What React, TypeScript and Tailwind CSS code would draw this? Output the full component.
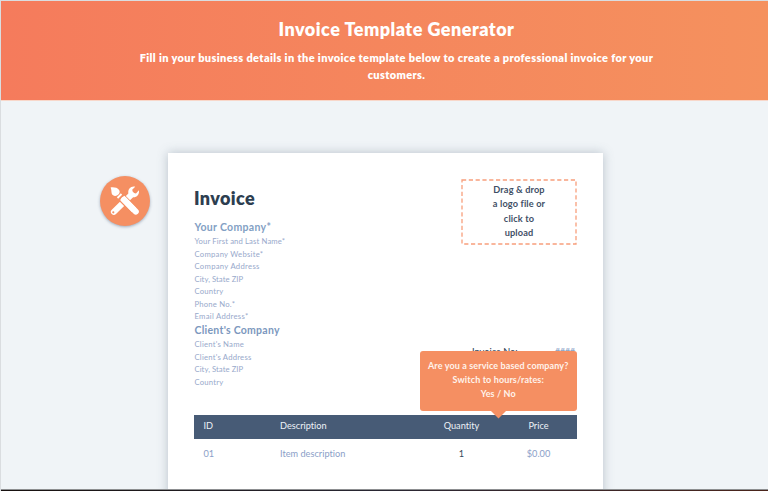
import React from "react";

const companyFields = [
  { text: "Your First and Last Name*", spacing: "tracking-[0.13px]" },
  { text: "Company Website*", spacing: "tracking-[0.26px]" },
  { text: "Company Address", spacing: "tracking-[0.3px]" },
  { text: "City, State ZIP", spacing: "tracking-[0.06px]" },
  { text: "Country", spacing: "tracking-[0.2px]" },
  { text: "Phone No.*", spacing: "tracking-[0.2px]" },
  { text: "Email Address*", spacing: "tracking-[0.28px]" },
];

const clientFields = [
  { text: "Client's Name", spacing: "tracking-[0.22px]" },
  { text: "Client's Address", spacing: "tracking-[0.22px]" },
  { text: "City, State ZIP", spacing: "tracking-[0.06px]" },
  { text: "Country", spacing: "tracking-[0.2px]" },
];

function Fields({ items }: { items: { text: string; spacing: string }[] }) {
  return (
    <ul className="pl-[0.5px] text-[7.7px] leading-[12.55px] text-[#98a9cb]">
      {items.map((f) => (
        <li key={f.text} className="whitespace-nowrap">
          <span className={f.spacing}>{f.text}</span>
        </li>
      ))}
    </ul>
  );
}

function ToolsIcon() {
  return (
    <svg viewBox="0 0 50 50" className="block h-[50px] w-[50px]" fill="#fff">
      {/* wrench */}
      <path
        d="M13.9 35.8 L31.5 18.6"
        stroke="#fff"
        strokeWidth="6"
        strokeLinecap="round"
      />
      <path d="M38.9 14.3 C39.7 18.6 36.6 21.8 32.6 21.3 L28.4 17.4 C27.6 13.2 31 9.8 35.2 10.8 L32.2 13.8 L33 16.8 L36 17.4 Z" />
      <circle cx="13.3" cy="36.3" r="1.1" fill="#f58f62" />
      {/* brush */}
      <path d="M20 20 L35.5 35.6" stroke="#f58f62" strokeWidth="8.2" />
      <path d="M22.2 21.8 L34 34" stroke="#fff" strokeWidth="6" />
      <path
        d="M24 23.6 L35.8 35.6"
        stroke="#fff"
        strokeWidth="6"
        strokeLinecap="round"
      />
      <path d="M17.5 22 L21.5 18" stroke="#fff" strokeWidth="1.8" />
      <path d="M10.6 11.4 C14 11.1 17.5 11.5 19.1 14 C20.1 15.7 19.8 17.1 18.4 18.6 C16.8 20.2 14.5 20.5 12.8 19.1 C10.9 17.4 12 14.6 10.6 11.4 Z" />
    </svg>
  );
}

export default function App() {
  return (
    <div className="relative flex h-[491px] w-[768px] flex-col overflow-hidden border-l border-t border-[#dadde0] bg-[#f0f4f7] font-['Lato','Open_Sans',sans-serif] [font-variant-ligatures:none]">
      <header className="h-[99px] shrink-0 bg-linear-to-r from-[#f57b5c] to-[#f5915e] pl-[24px] pt-[16px] text-center text-white shadow-[0_1px_0_#f8d7ca]">
        <h1 className="text-[18px] font-extrabold leading-6">
          <span className="tracking-[0.48px]">Invoice Template Generator</span>
        </h1>
        <p className="mt-[9px] text-[11px] font-extrabold leading-[16.7px] tracking-[0.36px]">
          Fill in your business details in the invoice template below to create a professional invoice for your
          <br />
          customers.
        </p>
      </header>

      <main className="flex min-h-0 flex-1 items-start pt-[53px]">
        <button className="ml-[98.5px] mt-[22.5px] h-[50px] w-[50px] shrink-0 rounded-full bg-[#f58f62] shadow-[0_1px_3px_rgba(60,80,110,0.45)]">
          <ToolsIcon />
        </button>

        <section className="ml-[18px] h-[345px] w-[435.5px] shrink-0 bg-white pl-[26.5px] pr-[26px] pt-[26px] shadow-[0_0_10px_rgba(80,100,120,0.35)]">
          <div className="flex h-[236px] justify-between">
            <div>
              <h2 className="mt-[7px] text-[18px] font-extrabold leading-[24px] text-[#2d3e50]">
                <span className="tracking-[0.36px]">Invoice</span>
              </h2>
              <h3 className="mt-[8.5px] pl-[0.5px] text-[10.5px] font-bold leading-[16px] text-[#839fc4]">
                <span className="tracking-[0.32px]">Your Company*</span>
              </h3>
              <div className="pt-[0.5px]">
                <Fields items={companyFields} />
              </div>
              <h3 className="pl-[0.5px] text-[10.5px] font-bold leading-[15px] text-[#7c98be]">
                <span className="tracking-[0.26px]">Client's Company</span>
              </h3>
              <div className="pt-[0.5px]">
                <Fields items={clientFields} />
              </div>
            </div>

            <div className="flex flex-col items-end">
              <div className="relative flex h-[66px] w-[116px] items-center justify-center text-center text-[9.2px] font-bold leading-[14.2px] tracking-[0.13px] text-[#3f4f66]">
                <svg className="absolute inset-0 h-full w-full" fill="none">
                  <rect
                    x="1"
                    y="1"
                    width="114"
                    height="64"
                    stroke="#f89f7c"
                    strokeWidth="1.3"
                    strokeDasharray="4.2 2.6"
                  />
                </svg>
                <p className="-mt-[1px]">
                  Drag &amp; drop
                  <br />a logo file or
                  <br />
                  click to
                  <br />
                  upload
                </p>
              </div>

              <div className="relative mt-[98.5px] flex h-4 w-[105px] justify-between pr-[2px] text-[9.2px] leading-4">
                <span className="font-medium text-[#33475b]">Invoice No:</span>
                <span className="text-[8.6px] font-bold text-[#8fa8c8]">####</span>
                <div className="absolute right-0 top-[7.5px] h-[60px] w-[157.5px] rounded-[3px] bg-[#f58f62] pt-[8px] text-center text-[9px] font-bold leading-[14.2px] tracking-[0.12px] text-[#fff3ec]">
                  Are you a service based company?
                  <br />
                  Switch to hours/rates:
                  <br />
                  Yes / No
                  <svg className="absolute left-[71px] top-[60px] h-[8px] w-[15px]" viewBox="0 0 15 8">
                    <path d="M0 0 H15 L7.5 7.5 Z" fill="#f58f62" />
                  </svg>
                </div>
              </div>
            </div>
          </div>

          <table className="w-full table-fixed text-left text-[9.2px]">
            <colgroup>
              <col className="w-[76px]" />
              <col className="w-[153px]" />
              <col className="w-[77px]" />
              <col className="w-[77px]" />
            </colgroup>
            <thead>
              <tr className="h-[24px] bg-[#475b76] text-[#eef2f7]">
                <th className="p-0 pb-[2px] pl-[9.5px] font-normal">ID</th>
                <th className="p-0 pb-[2px] pl-[10px] font-normal">Description</th>
                <th className="p-0 pb-[2px] text-center font-normal">Quantity</th>
                <th className="p-0 pb-[2px] text-center font-normal">Price</th>
              </tr>
            </thead>
            <tbody>
              <tr className="h-[30px] text-[#8ba0c8]">
                <td className="p-0 pl-[9.5px]">01</td>
                <td className="p-0 pl-[10px]">Item description</td>
                <td className="p-0 text-center text-[#33475b]">1</td>
                <td className="p-0 text-center">$0.00</td>
              </tr>
            </tbody>
          </table>
        </section>
      </main>
      <div className="absolute -left-px bottom-0 h-[2px] w-[768px] border-t border-[#8d8f91] bg-linear-to-r from-[#17110f] via-[#292733] to-[#4a241b]" />
    </div>
  );
}
